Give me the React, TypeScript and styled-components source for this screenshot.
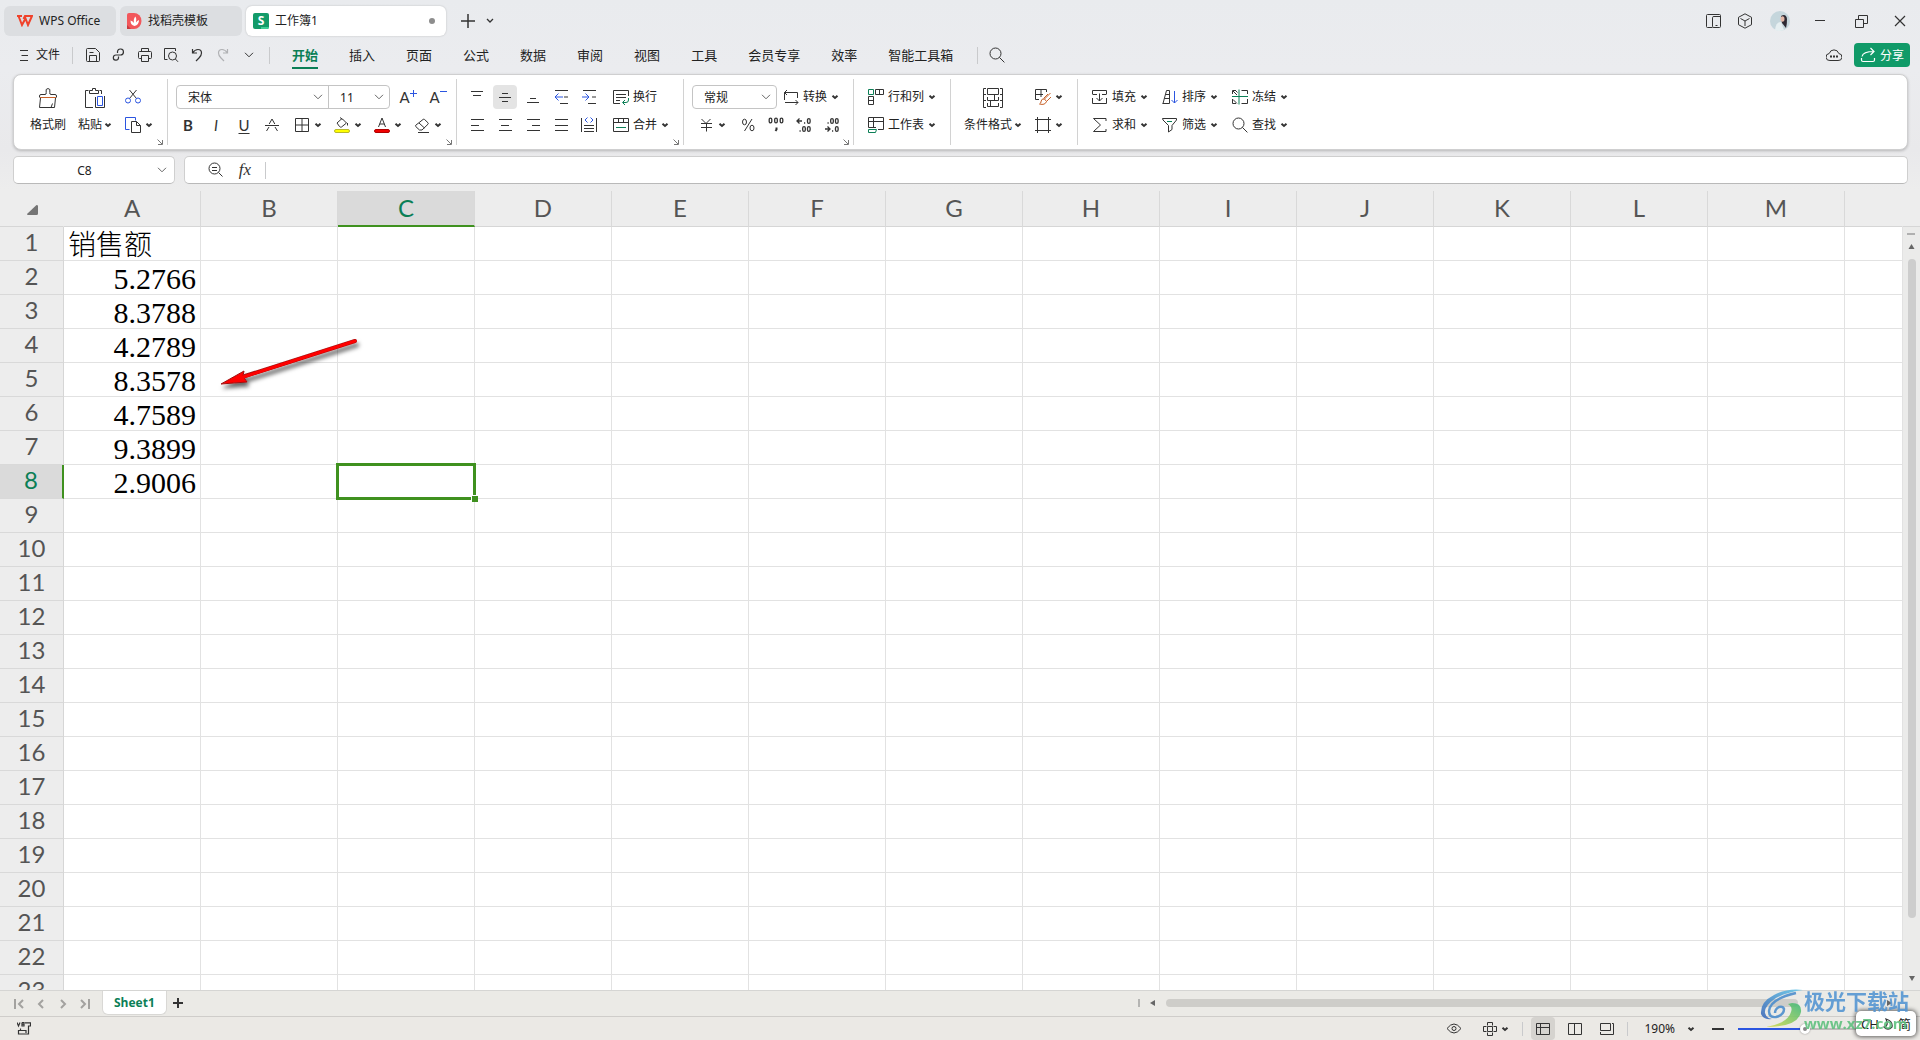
import React from "react";
import styled, { createGlobalStyle, css } from "styled-components";

const ui = `"Noto Sans", "Noto Sans CJK SC", sans-serif`;
const ink = "#333333";
const blue = "#2b55e0";
const green = "#0b7f56";
const orange = "#c8622a";
const gridGreen = "#3f911f";

const GlobalStyle = createGlobalStyle`
  * { box-sizing: border-box; }
  html, body, #root { height: 100%; }
  body { margin: 0; overflow: hidden; font-family: ${ui}; font-size: 12px; color: #222; }
  button, input, select { font: inherit; color: inherit; margin: 0; border: 0; background: none; padding: 0; outline: 0; }
  svg { display: block; flex: none; }
`;

const Shell = styled.div`
  display: flex;
  flex-direction: column;
  height: 100vh;
  background: linear-gradient(#e9ebee 0, #ebecef 70px, #e9e9eb 150px, #ededed 190px);
`;

/* ---------- title bar ---------- */

const TitleBar = styled.header`
  display: flex;
  align-items: center;
  gap: 4px;
  height: 38px;
  padding: 4px 1px 0 4px;
`;

const DocTab = styled.button<{ $width: number; $active?: boolean; $inset?: number }>`
  display: flex;
  align-items: center;
  gap: 6px;
  width: ${(p) => p.$width}px;
  height: 30px;
  padding: 0 ${(p) => p.$inset ?? 7}px;
  border-radius: 6px;
  background: ${(p) => (p.$active ? "#fff" : "#dcdee1")};
  box-shadow: ${(p) => (p.$active ? "0 0 2px rgba(0,0,0,.22)" : "none")};
  line-height: 16px;
  white-space: nowrap;
`;

const UnsavedDot = styled.i`
  width: 6px;
  height: 6px;
  margin-left: auto;
  margin-right: 4px;
  border-radius: 50%;
  background: #8d8d8d;
`;

const Spacer = styled.div`
  flex: 1;
`;

const WindowButton = styled.button<{ $width?: number }>`
  display: flex;
  align-items: center;
  justify-content: center;
  width: ${(p) => p.$width ?? 32}px;
  height: 30px;
`;

const WindowButtons = styled.div`
  display: flex;
  align-items: center;
`;

/* ---------- menu bar ---------- */

const MenuBar = styled.nav`
  display: flex;
  align-items: center;
  height: 36px;
  padding: 0 10px 2px 19px;
`;

const FileButton = styled.button`
  display: flex;
  align-items: center;
  gap: 7px;
  padding-right: 12px;
  line-height: 16px;
`;

const Rule = styled.i<{ $height?: number }>`
  flex: none;
  width: 1px;
  height: ${(p) => p.$height ?? 17}px;
  background: #c9cacc;
`;

const QuickTools = styled.div`
  display: flex;
  padding: 0 7px;
`;

const QuickButton = styled.button<{ $width?: number }>`
  display: flex;
  align-items: center;
  justify-content: center;
  width: ${(p) => p.$width ?? 26}px;
  height: 24px;
`;

const MenuTabs = styled.div`
  display: flex;
  gap: 31px;
  padding: 0 24px 0 22px;
`;

const MenuTab = styled.button<{ $active?: boolean }>`
  height: 28px;
  padding-top: 2px;
  font-size: 13px;
  line-height: 20px;
  font-weight: ${(p) => (p.$active ? 700 : 400)};
  color: ${(p) => (p.$active ? green : "#222")};
  border-bottom: 2px solid ${(p) => (p.$active ? green : "transparent")};
`;

const ShareButton = styled.button`
  display: flex;
  align-items: center;
  gap: 4px;
  height: 24px;
  padding: 0 6px;
  margin-left: 7px;
  border-radius: 4px;
  background: #109a68;
  color: #fff;
`;

/* ---------- ribbon ---------- */

const Ribbon = styled.section`
  display: flex;
  flex: none;
  margin: 0 12px 0 13px;
  padding: 4px 0 4px 3px;
  border: 1px solid #cfcfd0;
  border-radius: 8px;
  background: #fff;
  box-shadow: 0 1px 3px rgba(0, 0, 0, 0.22);
`;

const Group = styled.div<{ $start?: number; $end?: number; $gap?: number; $last?: boolean }>`
  position: relative;
  display: flex;
  gap: ${(p) => p.$gap ?? 6}px;
  height: 66px;
  padding: 6px ${(p) => p.$end ?? 10}px 8px ${(p) => p.$start ?? 10}px;
  border-right: ${(p) => (p.$last ? "0" : "1px solid #d2d2d2")};
`;

const Stack = styled.div`
  display: flex;
  flex-direction: column;
  gap: 4px;
`;

const Line = styled.div<{ $gap?: number }>`
  display: flex;
  align-items: center;
  gap: ${(p) => p.$gap ?? 4}px;
  height: 24px;
`;

const BigButton = styled.button`
  display: flex;
  flex-direction: column;
  align-items: center;
  justify-content: space-between;
  height: 52px;
  padding: 3px 3px 4px;
  line-height: 16px;
  white-space: nowrap;
`;

const BigLabel = styled.span`
  display: flex;
  align-items: center;
  gap: 2px;
`;

const ToolButton = styled.button<{ $on?: boolean }>`
  display: flex;
  align-items: center;
  justify-content: center;
  width: 24px;
  height: 24px;
  border-radius: 4px;
  background: ${(p) => (p.$on ? "#e4e4e4" : "transparent")};
`;

const SplitButton = styled.button`
  display: flex;
  align-items: center;
  gap: 4px;
  width: 36px;
  height: 24px;
  padding-left: 6px;
`;

const LabelButton = styled.button`
  display: flex;
  align-items: center;
  gap: 4px;
  height: 24px;
  padding: 0 4px;
  line-height: 16px;
  white-space: nowrap;
`;

const Glyph = styled.span<{ $bold?: boolean; $italic?: boolean; $underline?: boolean }>`
  font-family: Lato, sans-serif;
  font-size: 15px;
  line-height: 20px;
  color: ${ink};
  font-weight: ${(p) => (p.$bold ? 700 : 400)};
  font-style: ${(p) => (p.$italic ? "italic" : "normal")};
  ${(p) => p.$underline && css`text-decoration: underline; text-underline-offset: 2px;`}
`;

const Combo = styled.div`
  display: flex;
  border: 1px solid #c4c4c4;
  border-radius: 4px;
`;

const SelectBox = styled.label<{ $width: number; $divided?: boolean }>`
  position: relative;
  display: flex;
  align-items: center;
  width: ${(p) => p.$width}px;
  height: 22px;
  border-right: ${(p) => (p.$divided ? "1px solid #c4c4c4" : "0")};
  > svg {
    position: absolute;
    right: 5px;
    pointer-events: none;
  }
`;

const Select = styled.select`
  appearance: none;
  width: 100%;
  height: 22px;
  padding-left: 11px;
`;

const Launcher = styled.button`
  position: absolute;
  right: 4px;
  bottom: 0;
`;

/* ---------- formula bar ---------- */

const FormulaBar = styled.div`
  display: flex;
  flex: none;
  gap: 9px;
  padding: 6px 12px 7px 13px;
`;

const Field = styled.div<{ $width?: number }>`
  display: flex;
  align-items: center;
  flex: ${(p) => (p.$width ? "none" : 1)};
  width: ${(p) => (p.$width ? p.$width + "px" : "auto")};
  height: 28px;
  padding-left: ${(p) => (p.$width ? 0 : 12)}px;
  border: 1px solid #cfcfcf;
  border-bottom-color: #b9b9b9;
  border-radius: 5px;
  background: #fff;
`;

const NameInput = styled.input`
  flex: 1;
  min-width: 0;
  text-align: center;
  padding-left: 5px;
`;

const FormulaInput = styled.input`
  flex: 1;
  padding: 0 8px;
`;

const FxButton = styled.button`
  width: 32px;
  padding-right: 8px;
  font-family: "Liberation Serif", serif;
  font-style: italic;
  font-size: 17px;
  line-height: 20px;
  color: ${ink};
`;

/* ---------- sheet ---------- */

const SheetArea = styled.main`
  position: relative;
  display: flex;
  flex: 1;
  min-height: 0;
  overflow: hidden;
`;

const GridView = styled.div`
  flex: 1;
  overflow: hidden;
`;

const Grid = styled.table`
  width: 100%;
  table-layout: fixed;
  border-collapse: separate;
  border-spacing: 0;
  th, td { padding: 0; }
`;

const Col = styled.col<{ $width?: number }>`
  width: ${(p) => (p.$width ? p.$width + "px" : "auto")};
`;

const ColHead = styled.th<{ $active?: boolean; $corner?: boolean }>`
  height: 36px;
  border-bottom: ${(p) => (p.$active ? `2px solid ${gridGreen}` : "1px solid #d6d6d6")};
  border-right: 1px solid ${(p) => (p.$corner ? "transparent" : "#d9d9d9")};
  background: ${(p) => (p.$active ? "#dadada" : "#ededed")};
  color: ${(p) => (p.$active ? green : "#555")};
  font: 400 24px/33px Lato, sans-serif;
  vertical-align: top;
`;

const CornerMark = styled.div`
  display: flex;
  justify-content: flex-end;
  padding: 14px 25px 0 0;
`;

const RowHead = styled.th<{ $active?: boolean }>`
  height: 34px;
  border-bottom: 1px solid #d9d9d9;
  border-right: ${(p) => (p.$active ? `2px solid ${gridGreen}` : "1px solid #d6d6d6")};
  background: ${(p) => (p.$active ? "#dadada" : "#ededed")};
  color: ${(p) => (p.$active ? green : "#555")};
  font: 400 24px/30px Lato, sans-serif;
  vertical-align: top;
`;

const Cell = styled.td<{ $selected?: boolean }>`
  height: 34px;
  border-right: 1px solid #e2e2e2;
  border-bottom: 1px solid #e2e2e2;
  background: #fff;
  ${(p) =>
    p.$selected &&
    css`
      position: relative;
      &::before {
        content: "";
        position: absolute;
        inset: -2px;
        border: 3px solid ${gridGreen};
      }
      &::after {
        content: "";
        position: absolute;
        right: -4px;
        bottom: -4px;
        width: 6px;
        height: 6px;
        border: solid #fff;
        border-width: 1px 0 0 1px;
        background: ${gridGreen};
      }
    `}
`;

const CellText = styled.div<{ $text?: boolean }>`
  height: 33px;
  padding: 0 4px;
  color: #000;
  text-align: ${(p) => (p.$text ? "left" : "right")};
  font-family: "Liberation Serif", "Noto Sans CJK SC", serif;
  font-size: ${(p) => (p.$text ? 28 : 30)}px;
  font-weight: 300;
  line-height: ${(p) => (p.$text ? 38 : 36)}px;
`;

const VScroll = styled.div`
  display: flex;
  flex-direction: column;
  align-items: center;
  gap: 8px;
  width: 17px;
  padding: 36px 0 8px;
  background: linear-gradient(#ededed 35px, #d6d6d6 35px, #d6d6d6 36px, #ebebea 36px);
`;

const ScrollMark = styled.i<{ $w: number; $h: number }>`
  width: ${(p) => p.$w}px;
  height: ${(p) => p.$h}px;
  background: #b5b5b3;
`;

const VThumb = styled.div`
  width: 8px;
  height: 93%;
  border-radius: 4px;
  background: #cdcdcd;
`;

const VTrack = styled.div`
  flex: 1;
  width: 8px;
`;

const Pointer = styled.svg`
  position: absolute;
  left: 210px;
  top: 139px;
  pointer-events: none;
`;

/* ---------- sheet tabs and status ---------- */

const TabStrip = styled.div`
  display: flex;
  flex: none;
  height: 27px;
  padding: 0 28px 0 8px;
  border-top: 1px solid #d5d5d3;
  border-bottom: 1px solid #cfcdca;
  background: #ebeae6;
`;

const SheetNav = styled.div`
  display: flex;
  align-items: center;
  width: 94px;
`;

const NavButton = styled.button`
  display: flex;
  align-items: center;
  justify-content: center;
  width: 22px;
  height: 24px;
`;

const SheetTab = styled.button`
  height: 24px;
  padding: 0 11px;
  border: 1px solid #d9d8d5;
  border-top: 0;
  border-radius: 0 0 6px 6px;
  background: #fff;
  color: ${green};
  font-family: "Open Sans", sans-serif;
  font-size: 12px;
  font-weight: 700;
  line-height: 22px;
`;

const HScroll = styled.div`
  display: flex;
  align-items: center;
  width: 40%;
  height: 24px;
  margin-left: auto;
  gap: 10px;
`;

const HTrack = styled.div`
  flex: 1;
`;

const HThumb = styled.div`
  width: 89%;
  height: 8px;
  border-radius: 4px;
  background: #cecdc9;
`;

const StatusBar = styled.footer`
  display: flex;
  align-items: center;
  flex: none;
  height: 23px;
  padding: 0 28px 0 17px;
  background: #ebe9e5;
`;

const StatusButton = styled.button<{ $width?: number; $on?: boolean }>`
  display: flex;
  align-items: center;
  justify-content: center;
  gap: 4px;
  width: ${(p) => p.$width ?? 24}px;
  height: 23px;
  border-radius: 4px;
  background: ${(p) => (p.$on ? "#d5d3cf" : "transparent")};
`;

const ViewModes = styled.div`
  display: flex;
  gap: 8px;
  padding: 0 8px;
`;

const ZoomLevel = styled.button`
  display: flex;
  align-items: center;
  gap: 12px;
  margin: 0 17px 0 16px;
  line-height: 16px;
`;

const ZoomSlider = styled.input`
  appearance: none;
  width: 134px;
  height: 12px;
  margin: 0 8px 0 14px;
  &::-webkit-slider-runnable-track {
    height: 2px;
    background: linear-gradient(90deg, #2b55e0 50%, #bdbcb9 50%);
  }
  &::-webkit-slider-thumb {
    appearance: none;
    width: 10px;
    height: 10px;
    margin-top: -4px;
    border: 3px solid #fff;
    border-radius: 50%;
    background: #888;
    box-shadow: 0 0 2px rgba(0, 0, 0, 0.4);
  }
`;

const ImeBox = styled.div`
  position: absolute;
  right: 4px;
  bottom: 4px;
  display: flex;
  align-items: center;
  justify-content: space-between;
  width: 60px;
  height: 25px;
  padding: 0 5px;
  border-radius: 5px;
  background: #fff;
  box-shadow: 0 0 4px 1px rgba(0, 0, 0, 0.6);
  font-size: 13px;
  line-height: 18px;
`;

const Watermark = styled.div`
  position: absolute;
  right: 11px;
  bottom: 7px;
  display: flex;
  opacity: 0.88;
  pointer-events: none;
`;

const WatermarkText = styled.div`
  display: flex;
  flex-direction: column;
  font-family: "Open Sans", "Noto Sans CJK SC", sans-serif;
  white-space: nowrap;
`;

const WatermarkName = styled.span`
  color: #5294d2;
  font-size: 21px;
  font-weight: 700;
  line-height: 24px;
`;

const WatermarkUrl = styled.span`
  color: #5cc07c;
  font-size: 15px;
  font-weight: 700;
  line-height: 20px;
`;

/* ---------- drawings ---------- */

type IconProps = { w?: number; h?: number; color?: string; sw?: number; children: React.ReactNode };

const Icon = ({ w = 16, h = 16, color = ink, sw = 1, children }: IconProps) => (
  <svg width={w} height={h} viewBox={`0 0 ${w} ${h}`} fill="none" stroke={color} strokeWidth={sw} aria-hidden="true">
    {children}
  </svg>
);

const Caret = () => (
  <Icon w={8} h={8} sw={2}>
    <path d="M1.5 2.8 L4 5 L6.5 2.8" />
  </Icon>
);

const Chevron = ({ color = "#666" }: { color?: string }) => (
  <Icon w={10} h={6} color={color}>
    <path d="M1 .8 L5 4.8 L9 .8" />
  </Icon>
);

const LaunchIcon = () => (
  <Icon w={6} h={6} color="#777">
    <path d="M.5 .5 L5 5 M5.5 1 V5.5 H1" />
  </Icon>
);

type Stroke = [number, number, number];

const Lines = ({ rows }: { rows: Stroke[] }) => (
  <Icon>
    <path d={rows.map(([x1, x2, y]) => `M${x1} ${y}.5H${x2}`).join("")} />
  </Icon>
);

const icons = {
  save: (
    <Icon>
      <path d="M1.5 2.5 Q1.5 1.5 2.5 1.5 H10.5 L14.5 5.5 V13.5 Q14.5 14.5 13.5 14.5 H2.5 Q1.5 14.5 1.5 13.5 Z M4.5 14.5 V8.5 H11.5 V14.5 M4.5 5.5 H8.5" />
    </Icon>
  ),
  link: (
    <Icon sw={1.2}>
      <path d="M6.5 6 V4.5 A3 3 0 1 1 9.5 8 H5 A2.6 2.6 0 1 0 7.5 11 V9.5" />
    </Icon>
  ),
  print: (
    <Icon>
      <path d="M4.5 4.5 V1.5 H11.5 V4.5 M4.5 11.5 H2.5 Q1.5 11.5 1.5 10.5 V5.5 Q1.5 4.5 2.5 4.5 H13.5 Q14.5 4.5 14.5 5.5 V10.5 Q14.5 11.5 13.5 11.5 H11.5 M4.5 8.5 H11.5 V14.5 H4.5 Z" />
    </Icon>
  ),
  preview: (
    <Icon>
      <path d="M4.5 12.5 H1.5 V1.5 H12.5 V4" />
      <circle cx="9.5" cy="9" r="4" />
      <path d="M12.4 12 L15 14.8" />
    </Icon>
  ),
  undo: (
    <Icon sw={1.2}>
      <path d="M3.5 2 V6 H8 M3.5 6 Q6 2.5 9 2.5 Q12.5 2.5 12.5 6 Q12.5 8.5 10 11 L7 14" />
    </Icon>
  ),
  redo: (
    <Icon sw={1.2} color="#b0b1b4">
      <path d="M12.5 2 V6 H8 M12.5 6 Q10 2.5 7 2.5 Q3.5 2.5 3.5 6 Q3.5 8.5 6 11 L9 14" />
    </Icon>
  ),
  search: (
    <Icon>
      <circle cx="6.5" cy="6.5" r="5.5" />
      <path d="M10.4 10.4 L15.4 15.4" />
    </Icon>
  ),
  brush: (
    <Icon w={20} h={20}>
      <path d="M1.5 9.5 V8 Q1.5 6.5 3 6.5 H7 Q8.5 6.5 8.2 4.5 Q7.2 .5 10 .5 Q12.8 .5 11.8 4.5 Q11.5 6.5 13 6.5 H17 Q18.5 6.5 18.5 8 V9.5 M2.5 10 L1.5 19.5 H16.5 L17.5 10 M13 19.5 L14.5 15.5" />
      <path d="M2 9.5 H18" stroke={orange} />
    </Icon>
  ),
  paste: (
    <Icon w={20} h={20}>
      <path d="M3.5 2.5 H.5 V19.5 H8 M14.5 2.5 H16.5 V6 M4.5 2.5 H7.5 V.5 H10.5 V2.5 H13.5 V5.5 H4.5 Z M10.5 9 V19.5 H19.5 V8" />
      <path d="M12.5 8.5 H17.5 V17.5 H12.5 Z" stroke={blue} />
    </Icon>
  ),
  cut: (
    <Icon>
      <path d="M4.5 1 L11.4 9.4 M11.5 1 L4.6 9.4" />
      <circle cx="3" cy="11.5" r="2.5" stroke={blue} />
      <circle cx="13" cy="11.5" r="2.5" stroke={blue} />
    </Icon>
  ),
  copy: (
    <Icon>
      <path d="M10.5 3.5 V.5 H.5 V12.5 H4.5" stroke={blue} />
      <path d="M6.5 4.5 H11.5 L15.5 8.5 V15.5 H6.5 Z M11.5 4.5 V8.5 H15.5" />
    </Icon>
  ),
  plus: (
    <Icon w={7} h={14} color={blue}>
      <path d="M3.5 0 V7 M0 3.5 H7" />
    </Icon>
  ),
  minus: (
    <Icon w={7} h={14} color={blue}>
      <path d="M0 1.5 H7" />
    </Icon>
  ),
  strike: (
    <Icon>
      <path d="M1 8.5 H15 M5.2 7 L8 2 L10.8 7 M2.5 14 L5 10 M13.5 14 L11 10" />
    </Icon>
  ),
  borders: (
    <Icon>
      <path d="M1.5 1.5 H14.5 V14.5 H1.5 Z M8 1.5 V14.5 M1.5 8 H14.5" />
    </Icon>
  ),
  fill: (
    <Icon>
      <path d="M3 6 L8 1.5 L12.5 6 L7.5 10 Q6.5 10.5 5.5 9.5 Z M6 .5 L8.5 2.5 M13.5 6 V8.5" />
      <rect x=".5" y="12.5" width="15" height="3" rx="1.5" fill="#ffff00" stroke="#b9b92a" />
    </Icon>
  ),
  fontColor: (
    <Icon>
      <path d="M4.5 10 L8 1 L11.5 10 M5.7 7 H10.3" />
      <rect x=".5" y="12.5" width="15" height="3" rx="1.5" fill="#f00000" stroke="#b00000" />
    </Icon>
  ),
  eraser: (
    <Icon>
      <path d="M9 2.5 Q9.8 1.8 10.6 2.5 L14 5.8 Q14.6 6.5 14 7.2 L8 13 H5.5 L1.8 9.6 Q1 9 1.8 8.2 Z M5 6 L10.5 11 M4 15.5 H15" />
    </Icon>
  ),
  outdent: (
    <Icon>
      <path d="M2 1.5 H15 M11 8 H15 M7 14.5 H15" />
      <path d="M2 8 H10 M5.5 4.5 L2 8 L5.5 11.5" stroke={blue} />
    </Icon>
  ),
  indent: (
    <Icon>
      <path d="M2 1.5 H15 M11 8 H15 M7 14.5 H15" />
      <path d="M1 8 H8 M4.5 4.5 L8 8 L4.5 11.5" stroke={blue} />
    </Icon>
  ),
  distribute: (
    <Icon>
      <path d="M.5 1 V15 M15.5 1 V15 M3 8.5 H13 M3 11.5 H13 M3 14.5 H13" />
      <path d="M6.5 .5 L4 3 L6.5 5.5 M9.5 .5 L12 3 L9.5 5.5" stroke={blue} />
    </Icon>
  ),
  wrap: (
    <Icon>
      <path d="M15.5 7 V1.5 H.5 V14.5 H7 M3 5.5 H13 M3 8.5 H13 M3 11.5 H7" />
      <path d="M15.5 9 V11 Q15.5 13.5 13 13.5 H10 M12 11 L9.5 13.5 L12 16" stroke={green} />
    </Icon>
  ),
  merge: (
    <Icon>
      <path d="M.5 1.5 H15.5 V14.5 H.5 Z M.5 5.5 H15.5 M5.5 1.5 V5.5 M10.5 1.5 V5.5" />
      <path d="M3 10.5 H13" stroke={green} />
    </Icon>
  ),
  convert: (
    <Icon>
      <path d="M1.5 11 V3.5 H14.5 V9 M4 1 L1.5 3.5 L4 6 M2 13.5 H15 M12.5 11 L15 13.5 L12.5 16" />
    </Icon>
  ),
  yen: (
    <Icon>
      <path d="M3.5 2 L8 6.5 L12.5 2 M8.5 6.5 V14.5 M3 6.5 H14 M3 10.5 H14" />
    </Icon>
  ),
  percent: (
    <Icon>
      <ellipse cx="4.5" cy="5" rx="2" ry="2.8" />
      <ellipse cx="12" cy="11" rx="2" ry="2.8" />
      <path d="M12 2 L4.5 14" />
    </Icon>
  ),
  thousands: (
    <Icon sw={1.3}>
      <rect x="1.2" y="1.2" width="2.6" height="4.6" rx="1.3" />
      <rect x="6.7" y="1.2" width="2.6" height="4.6" rx="1.3" />
      <rect x="12.2" y="1.2" width="2.6" height="4.6" rx="1.3" />
      <path d="M8.5 10.5 V12.5 L7.5 14" strokeWidth="2" />
    </Icon>
  ),
  moreDigits: (
    <Icon sw={1.3}>
      <path d="M1 4 H6 M3.5 1.5 L1 4 L3.5 6.5 M8 6 H9.2 M3.5 14 H4.7" />
      <rect x="11.5" y="1.7" width="2.6" height="4.6" rx="1.3" />
      <rect x="6.7" y="9.7" width="2.6" height="4.6" rx="1.3" />
      <rect x="11.5" y="9.7" width="2.6" height="4.6" rx="1.3" />
    </Icon>
  ),
  lessDigits: (
    <Icon sw={1.3}>
      <path d="M1 12 H6 M3.5 9.5 L6 12 L3.5 14.5 M8 14 H9.2 M3.5 6 H4.7" />
      <rect x="11.5" y="9.7" width="2.6" height="4.6" rx="1.3" />
      <rect x="6.7" y="1.7" width="2.6" height="4.6" rx="1.3" />
      <rect x="11.5" y="1.7" width="2.6" height="4.6" rx="1.3" />
    </Icon>
  ),
  rowsCols: (
    <Icon>
      <path d="M7.5 .5 H15.5 V5.5 H7.5 Z M11.5 .5 V5.5 M.5 7.5 H5.5 V15.5 H.5 Z M.5 11.5 H5.5" />
      <path d="M.5 .5 H5.5 V5.5 H.5 Z" stroke={green} />
    </Icon>
  ),
  worksheet: (
    <Icon>
      <path d="M.5 10.5 V.5 H15.5 V12.5 H10 M.5 4.5 H15.5 M5.5 .5 V10.5 M.5 10.5 H8" />
      <path d="M.5 12.5 H8.5 L7.5 15.5 H.5 Z" stroke={green} />
    </Icon>
  ),
  conditional: (
    <Icon w={20} h={20}>
      <path d="M3 .5 H.5 V19.5 H3 M17 .5 H19.5 V19.5 H17 M.5 6.5 H3 M.5 12.5 H3 M17 6.5 H19.5 M17 12.5 H19.5 M4.5 .5 H15.5 V6.5 H4.5 Z M4.5 9 V12.5 H15.5 V9 M11.5 6.5 V12.5 M7.5 12.5 V18.5 M4.5 15 V18.5 H15.5 V15" />
    </Icon>
  ),
  tableStyle: (
    <Icon>
      <path d="M4 10.5 H.5 V.5 H11.5 V3 M.5 5.5 H8 M6 .5 V8" />
      <path d="M15.5 4 L9.5 10 M16 8 L11.5 12.5 M9.5 10 Q6.5 9.5 6.2 12 Q6 14.5 4.5 15 Q10 16.5 11.5 12.5 Z M13 5 L8.5 9.5" stroke={orange} />
    </Icon>
  ),
  cellFrame: (
    <Icon>
      <path d="M2.5 0 V16 M13.5 0 V16 M0 2.5 H16 M0 13.5 H16" />
    </Icon>
  ),
  fillDown: (
    <Icon>
      <path d="M.5 5 V1.5 H14.5 V5 M.5 5.5 H5 M10 5.5 H14.5 M.5 9 V14.5 H14.5 V9 M7.5 4.5 V12 M4.5 9 L7.5 12 L10.5 9" />
    </Icon>
  ),
  sum: (
    <Icon>
      <path d="M14 4 V1.5 H1.5 L8.5 8 L1.5 14.5 H14 V12" />
    </Icon>
  ),
  sort: (
    <Icon>
      <path d="M1 14.5 L4.5 1.5 H7.5 V14.5 M2.5 9.5 H7.5 M3.8 5.5 H7.5 M.5 14.5 H7.5" />
      <path d="M12.5 2 V14 M9.5 11 L12.5 14 L15.5 11" stroke={blue} />
    </Icon>
  ),
  filter: (
    <Icon>
      <path d="M.5 1.5 H14.5 V3 L10 8.5 V12.5 L6.5 15 V8.5 L1 3 Z" />
      <path d="M5 4.5 H10" stroke={green} />
    </Icon>
  ),
  freeze: (
    <Icon>
      <path d="M4 1.5 H.5 V5 M.5 10 V14.5 H4 M9.5 1.5 H15.5 V5 M15.5 10 V14.5 H9.5 M1 2 L5 6 M3.5 1.5 L5.5 3.5 M1 10.5 L5 14.5" />
      <path d="M7 .5 V15.5 M0 7.5 H16" stroke={green} />
    </Icon>
  ),
};

const menuTabs = ["开始", "插入", "页面", "公式", "数据", "审阅", "视图", "工具", "会员专享", "效率", "智能工具箱"];
const columns = "ABCDEFGHIJKLM".split("");
const rowCount = 23;
const columnA: Record<number, string> = {
  1: "销售额",
  2: "5.2766",
  3: "8.3788",
  4: "4.2789",
  5: "8.3578",
  6: "4.7589",
  7: "9.3899",
  8: "2.9006",
};

const Title = () => (
  <TitleBar>
    <DocTab $width={112} $inset={13}>
      <Icon w={16} h={12} color="#f0422b" sw={2}>
        <path d="M0 1 H5 M1.5 1 L5 10 L8.5 3.5 L11 10 L15 1 H8 L6.5 4" />
      </Icon>
      WPS Office
    </DocTab>
    <DocTab $width={122}>
      <svg width="15" height="16" viewBox="0 0 15 16" aria-hidden="true">
        <path d="M0 2 Q0 0 2 0 H7 A7.5 8 0 0 1 7 16 H0 Z" fill="#f2575b" />
        <path d="M0 12 L4 16 H0 Z" fill="#c93a3e" />
        <path d="M7.5 13 Q3.5 12 3.5 7.5 Q6 8 7 10 Q6 6 8.5 3.5 Q10 6 9 9.5 Q10 7.5 12 7 Q12 12 7.5 13 Z" fill="#fff" />
      </svg>
      找稻壳模板
    </DocTab>
    <DocTab $width={200} $active>
      <svg width="16" height="16" viewBox="0 0 16 16" aria-hidden="true">
        <rect width="16" height="16" rx="2" fill="#139b69" />
        <path d="M8 16 V14 H16 Q16 16 14 16 Z" fill="#3fcf96" />
        <text x="8" y="12" textAnchor="middle" fontFamily="Open Sans, sans-serif" fontWeight="700" fontSize="12" fill="#fff">S</text>
      </svg>
      工作簿1
      <UnsavedDot />
    </DocTab>
    <WindowButtons>
      <WindowButton $width={36} aria-label="新建">
        <Icon w={14} h={14} sw={1.5}>
          <path d="M7 0 V14 M0 7 H14" />
        </Icon>
      </WindowButton>
      <Icon w={8} h={6} sw={1.3}>
        <path d="M1 1 L4 4 L7 1" />
      </Icon>
    </WindowButtons>
    <Spacer />
    <WindowButtons>
      <WindowButton aria-label="分屏">
        <Icon w={15} h={15}>
          <path d="M6.5 13.5 H1.5 Q.5 13.5 .5 12.5 V1.5 Q.5 .5 1.5 .5 H13.5 Q14.5 .5 14.5 1.5 V12.5 Q14.5 13.5 13.5 13.5 H8 Q6.5 13.5 6.5 12.5 V3.5 Q6.5 2.5 8 2.5 H14 M9.5 11.5 H11.5" />
        </Icon>
      </WindowButton>
      <WindowButton aria-label="应用">
        <Icon w={16} h={16}>
          <path d="M8 .8 L14.5 4.3 V11.7 L8 15.2 L1.5 11.7 V4.3 Z M3.5 5.5 L8 8 L12.5 5.5 M8 8 V13" />
        </Icon>
      </WindowButton>
      <WindowButton $width={38} aria-label="账号">
        <svg width="20" height="20" viewBox="0 0 20 20" aria-hidden="true">
          <circle cx="10" cy="10" r="10" fill="#c5d6dc" />
          <path d="M5 19 Q6 11 11 11 L14 19 Q9 21 5 19" fill="#e6eff1" />
          <path d="M11 5 Q16 2 17 8 Q17 14 16 17 L12 12 Z" fill="#2e2a33" />
          <ellipse cx="12.5" cy="8" rx="2" ry="2.8" fill="#e3b8a8" />
        </svg>
      </WindowButton>
      <WindowButton $width={42} aria-label="最小化">
        <Icon w={12} h={12}>
          <path d="M1 5.5 H11" />
        </Icon>
      </WindowButton>
      <WindowButton $width={40} aria-label="还原">
        <Icon w={13} h={13}>
          <path d="M.5 4.5 H8.5 V12.5 H.5 Z M3.5 4.5 V.5 H12.5 V8.5 H8.5" />
        </Icon>
      </WindowButton>
      <WindowButton $width={38} aria-label="关闭">
        <Icon w={12} h={12} sw={1.2}>
          <path d="M1 1 L11 11 M11 1 L1 11" />
        </Icon>
      </WindowButton>
    </WindowButtons>
  </TitleBar>
);

const Menu = () => (
  <MenuBar>
    <FileButton>
      <Icon w={10} h={12}>
        <path d="M1 1.5 H9 M2.5 6.5 H9 M1 11.5 H9" />
      </Icon>
      文件
    </FileButton>
    <Rule />
    <QuickTools>
      <QuickButton aria-label="保存">{icons.save}</QuickButton>
      <QuickButton aria-label="链接">{icons.link}</QuickButton>
      <QuickButton aria-label="打印">{icons.print}</QuickButton>
      <QuickButton aria-label="打印预览">{icons.preview}</QuickButton>
      <QuickButton aria-label="撤销">{icons.undo}</QuickButton>
      <QuickButton aria-label="恢复">{icons.redo}</QuickButton>
      <QuickButton aria-label="更多">
        <Chevron color={ink} />
      </QuickButton>
    </QuickTools>
    <Rule />
    <MenuTabs>
      {menuTabs.map((label, i) => (
        <MenuTab key={label} $active={i === 0}>
          {label}
        </MenuTab>
      ))}
    </MenuTabs>
    <Rule />
    <QuickButton $width={38} aria-label="搜索">{icons.search}</QuickButton>
    <Spacer />
    <QuickButton aria-label="云状态">
      <Icon w={16} h={14}>
        <path d="M4 12.5 A3.5 3.5 0 0 1 3.2 5.5 A5 5 0 0 1 12.8 5.5 A3.5 3.5 0 0 1 12 12.5 Z" />
        <path d="M4 8.5 H6 M7 8.5 H9 M10 8.5 H12" strokeWidth="2" />
      </Icon>
    </QuickButton>
    <ShareButton>
      <Icon w={16} color="#fff" sw={1.2}>
        <path d="M2 9.5 Q3 4.5 14 4.5 M10.5 1 L14 4.5 L10.5 8 M1.5 11 V13 Q1.5 14.5 3 14.5 H13 Q14.5 14.5 14.5 13 V11" />
      </Icon>
      分享
    </ShareButton>
  </MenuBar>
);

const RibbonLabel = ({ icon, children, caret = true }: { icon: React.ReactNode; children: string; caret?: boolean }) => (
  <LabelButton>
    {icon}
    {children}
    {caret && <Caret />}
  </LabelButton>
);

const Tools = () => (
  <Ribbon>
    <Group>
      <BigButton>
        {icons.brush}
        格式刷
      </BigButton>
      <BigButton>
        {icons.paste}
        <BigLabel>
          粘贴
          <Caret />
        </BigLabel>
      </BigButton>
      <Stack>
        <ToolButton aria-label="剪切">{icons.cut}</ToolButton>
        <LabelButton aria-label="复制">
          {icons.copy}
          <Caret />
        </LabelButton>
      </Stack>
      <Launcher aria-label="剪贴板设置"><LaunchIcon /></Launcher>
    </Group>

    <Group $start={8} $end={6}>
      <Stack>
        <Line $gap={6}>
          <Combo>
            <SelectBox $width={152} $divided>
              <Select aria-label="字体">
                <option>宋体</option>
              </Select>
              <Chevron />
            </SelectBox>
            <SelectBox $width={60}>
              <Select aria-label="字号">
                <option>11</option>
              </Select>
              <Chevron />
            </SelectBox>
          </Combo>
          <ToolButton aria-label="增大字号">
            <Glyph>A</Glyph>
            {icons.plus}
          </ToolButton>
          <ToolButton aria-label="减小字号">
            <Glyph>A</Glyph>
            {icons.minus}
          </ToolButton>
        </Line>
        <Line>
          <ToolButton><Glyph $bold>B</Glyph></ToolButton>
          <ToolButton><Glyph $italic>I</Glyph></ToolButton>
          <ToolButton><Glyph $underline>U</Glyph></ToolButton>
          <ToolButton aria-label="删除线">{icons.strike}</ToolButton>
          <SplitButton aria-label="边框">{icons.borders}<Caret /></SplitButton>
          <SplitButton aria-label="填充颜色">{icons.fill}<Caret /></SplitButton>
          <SplitButton aria-label="字体颜色">{icons.fontColor}<Caret /></SplitButton>
          <SplitButton aria-label="清除">{icons.eraser}<Caret /></SplitButton>
        </Line>
      </Stack>
      <Launcher aria-label="字体设置"><LaunchIcon /></Launcher>
    </Group>

    <Group $start={8} $gap={8}>
      <Stack>
        <Line>
          <ToolButton aria-label="顶端对齐"><Lines rows={[[2, 14, 2], [4, 12, 6]]} /></ToolButton>
          <ToolButton aria-label="垂直居中" $on><Lines rows={[[5, 11, 4], [2, 14, 8], [5, 11, 12]]} /></ToolButton>
          <ToolButton aria-label="底端对齐"><Lines rows={[[5, 11, 9], [2, 14, 13]]} /></ToolButton>
          <ToolButton aria-label="减少缩进">{icons.outdent}</ToolButton>
          <ToolButton aria-label="增加缩进">{icons.indent}</ToolButton>
        </Line>
        <Line>
          <ToolButton aria-label="左对齐"><Lines rows={[[2, 15, 2], [2, 10, 8], [2, 15, 13]]} /></ToolButton>
          <ToolButton aria-label="居中"><Lines rows={[[2, 15, 2], [4, 12, 8], [2, 15, 13]]} /></ToolButton>
          <ToolButton aria-label="右对齐"><Lines rows={[[2, 15, 2], [7, 15, 8], [2, 15, 13]]} /></ToolButton>
          <ToolButton aria-label="两端对齐"><Lines rows={[[2, 15, 2], [2, 15, 8], [2, 15, 13]]} /></ToolButton>
          <ToolButton aria-label="分散对齐">{icons.distribute}</ToolButton>
        </Line>
      </Stack>
      <Stack>
        <RibbonLabel icon={icons.wrap} caret={false}>换行</RibbonLabel>
        <RibbonLabel icon={icons.merge}>合并</RibbonLabel>
      </Stack>
      <Launcher aria-label="对齐设置"><LaunchIcon /></Launcher>
    </Group>

    <Group $start={8} $end={9}>
      <Stack>
        <Line $gap={2}>
          <Combo>
            <SelectBox $width={83}>
              <Select aria-label="数字格式">
                <option>常规</option>
              </Select>
              <Chevron />
            </SelectBox>
          </Combo>
          <RibbonLabel icon={icons.convert}>转换</RibbonLabel>
        </Line>
        <Line $gap={8}>
          <SplitButton aria-label="货币">{icons.yen}<Caret /></SplitButton>
          <Line>
            <ToolButton aria-label="百分比">{icons.percent}</ToolButton>
            <ToolButton aria-label="千位分隔">{icons.thousands}</ToolButton>
            <ToolButton aria-label="增加小数位">{icons.moreDigits}</ToolButton>
            <ToolButton aria-label="减少小数位">{icons.lessDigits}</ToolButton>
          </Line>
        </Line>
      </Stack>
      <Launcher aria-label="数字设置"><LaunchIcon /></Launcher>
    </Group>

    <Group>
      <Stack>
        <RibbonLabel icon={icons.rowsCols}>行和列</RibbonLabel>
        <RibbonLabel icon={icons.worksheet}>工作表</RibbonLabel>
      </Stack>
    </Group>

    <Group>
      <BigButton>
        {icons.conditional}
        <BigLabel>
          条件格式
          <Caret />
        </BigLabel>
      </BigButton>
      <Stack>
        <LabelButton aria-label="表格样式">{icons.tableStyle}<Caret /></LabelButton>
        <LabelButton aria-label="单元格样式">{icons.cellFrame}<Caret /></LabelButton>
      </Stack>
    </Group>

    <Group $last>
      <Stack>
        <RibbonLabel icon={icons.fillDown}>填充</RibbonLabel>
        <RibbonLabel icon={icons.sum}>求和</RibbonLabel>
      </Stack>
      <Stack>
        <RibbonLabel icon={icons.sort}>排序</RibbonLabel>
        <RibbonLabel icon={icons.filter}>筛选</RibbonLabel>
      </Stack>
      <Stack>
        <RibbonLabel icon={icons.freeze}>冻结</RibbonLabel>
        <RibbonLabel icon={icons.search}>查找</RibbonLabel>
      </Stack>
    </Group>
  </Ribbon>
);

const Formula = () => (
  <FormulaBar>
    <Field $width={162}>
      <NameInput aria-label="名称框" defaultValue="C8" />
      <WindowButton $width={24} aria-label="名称列表">
        <Chevron />
      </WindowButton>
    </Field>
    <Field>
      <WindowButton $width={36} aria-label="浏览公式">
        <Icon>
          <circle cx="7.5" cy="6.5" r="5.5" />
          <path d="M11.5 10.5 L15.5 14.5 M5 5.5 H10 M5 8.5 H10" />
        </Icon>
      </WindowButton>
      <FxButton>fx</FxButton>
      <Rule />
      <FormulaInput aria-label="编辑栏" />
    </Field>
  </FormulaBar>
);

const Sheet = () => (
  <SheetArea>
    <GridView>
      <Grid>
        <colgroup>
          <Col $width={64} />
          {columns.map((c) => (
            <Col key={c} $width={137} />
          ))}
          <Col />
        </colgroup>
        <thead>
          <tr>
            <ColHead $corner>
              <CornerMark>
                <svg width="11" height="10" viewBox="0 0 11 10" aria-hidden="true">
                  <path d="M0 9 L9.5 0 Q11 0 11 1 V8.5 Q11 10 9.5 10 H1 Q0 10 0 9 Z" fill="#757575" />
                </svg>
              </CornerMark>
            </ColHead>
            {columns.map((c) => (
              <ColHead key={c} scope="col" $active={c === "C"}>
                {c}
              </ColHead>
            ))}
            <ColHead $corner />
          </tr>
        </thead>
        <tbody>
          {Array.from({ length: rowCount }, (_, i) => i + 1).map((row) => (
            <tr key={row}>
              <RowHead scope="row" $active={row === 8}>
                {row}
              </RowHead>
              {columns.map((c) => (
                <Cell key={c} $selected={row === 8 && c === "C"}>
                  {c === "A" && columnA[row] && <CellText $text={row === 1}>{columnA[row]}</CellText>}
                </Cell>
              ))}
              <Cell />
            </tr>
          ))}
        </tbody>
      </Grid>
    </GridView>
    <VScroll>
      <svg width="9" height="24" viewBox="0 0 9 24" aria-hidden="true">
        <path d="M0 7 H8" stroke="#b0b0b0" strokeWidth="2" />
        <path d="M4.5 17 L7.5 22 H1.5 Z" fill="#666" />
      </svg>
      <VTrack>
        <VThumb />
      </VTrack>
      <svg width="8" height="6" viewBox="0 0 8 6" aria-hidden="true">
        <path d="M1 0 H7 L4 5 Z" fill="#666" />
      </svg>
    </VScroll>
    <Pointer width="160" height="70" viewBox="0 0 160 70" aria-hidden="true">
      <defs>
        <filter id="drop" x="-10%" y="-20%" width="130%" height="170%">
          <feDropShadow dx="2" dy="4" stdDeviation="2" floodColor="#000" floodOpacity=".6" />
        </filter>
      </defs>
      <g filter="url(#drop)">
        <path d="M145 11 L35 46" stroke="#a01010" strokeWidth="4" strokeLinecap="round" />
        <path d="M11 54 L34 41 L33 46 L37 52 Z" fill="#f00" stroke="#a01010" strokeWidth="1" strokeLinejoin="round" />
        <path d="M145 11 L33 47" stroke="#f00" strokeWidth="3" strokeLinecap="round" />
      </g>
    </Pointer>
  </SheetArea>
);

const NavIcon = ({ d }: { d: string }) => (
  <Icon w={10} h={10} sw={2} color="#a3a29f">
    <path d={d} />
  </Icon>
);

const Bottom = () => (
  <>
    <TabStrip>
      <SheetNav>
        <NavButton aria-label="第一张"><NavIcon d="M1 0 V10 M9 1 L5 5 L9 9" /></NavButton>
        <NavButton aria-label="上一张"><NavIcon d="M7 1 L3 5 L7 9" /></NavButton>
        <NavButton aria-label="下一张"><NavIcon d="M3 1 L7 5 L3 9" /></NavButton>
        <NavButton aria-label="最后一张"><NavIcon d="M9 0 V10 M1 1 L5 5 L1 9" /></NavButton>
      </SheetNav>
      <SheetTab>Sheet1</SheetTab>
      <NavButton aria-label="新建工作表">
        <Icon w={10} h={10} sw={2}>
          <path d="M5 0 V10 M0 5 H10" />
        </Icon>
      </NavButton>
      <HScroll>
        <ScrollMark $w={2} $h={8} />
        <svg width="6" height="6" viewBox="0 0 6 6" aria-hidden="true">
          <path d="M5 0 V6 L0 3 Z" fill="#666" />
        </svg>
        <HTrack>
          <HThumb />
        </HTrack>
        <svg width="6" height="6" viewBox="0 0 6 6" aria-hidden="true">
          <path d="M1 0 V6 L6 3 Z" fill="#666" />
        </svg>
      </HScroll>
    </TabStrip>
    <StatusBar>
      <Icon w={14} h={13} sw={1.2}>
        <path d="M0 .5 L1.5 4 L3 .5 M5 .5 V4 H7 V.5 H5 M5 2.2 H7 M8 .8 H13.5 V4 H11.5 V12 H1.5 V8.5 H9 V11 M3.5 8.5 V6.5" />
      </Icon>
      <Spacer />
      <StatusButton $width={32} aria-label="护眼">
        <Icon>
          <path d="M1 7.5 Q8 -1.5 15 7.5 Q8 16.5 1 7.5 Z" />
          <circle cx="8" cy="7.5" r="2" />
        </Icon>
      </StatusButton>
      <StatusButton $width={52} aria-label="阅读模式">
        <Icon w={14} h={14}>
          <path d="M4.5 3.5 V.5 H9.5 V3.5 M4.5 10.5 V13.5 H9.5 V10.5 M3.5 4.5 H.5 V9.5 H3.5 M10.5 4.5 H13.5 V9.5 H10.5 M4.5 4.5 H9.5 V9.5 H4.5 Z" />
        </Icon>
        <Caret />
      </StatusButton>
      <Rule $height={14} />
      <ViewModes>
        <StatusButton $on aria-label="普通视图">
          <Icon w={14} h={12}>
            <path d="M.5 .5 H13.5 V11.5 H.5 Z M.5 4.5 H13.5 M4.5 .5 V11.5" />
          </Icon>
        </StatusButton>
        <StatusButton aria-label="分页预览">
          <Icon w={14} h={12}>
            <path d="M.5 .5 H13.5 V11.5 H.5 Z M6.5 .5 V11.5" />
          </Icon>
        </StatusButton>
        <StatusButton aria-label="页面布局">
          <Icon w={14} h={12}>
            <path d="M.5 .5 H10.5 V7.5 H.5 Z M.5 9 V11.5 H13.5 V.5 H12" />
          </Icon>
        </StatusButton>
      </ViewModes>
      <Rule $height={14} />
      <ZoomLevel>
        190%
        <Caret />
      </ZoomLevel>
      <StatusButton $width={12} aria-label="缩小">
        <Icon w={12} h={4} sw={2}>
          <path d="M0 2 H12" />
        </Icon>
      </StatusButton>
      <ZoomSlider type="range" aria-label="缩放比例" min={0} max={100} defaultValue={50} />
      <StatusButton $width={12} aria-label="放大">
        <Icon w={12} h={12} sw={2}>
          <path d="M6 0 V12 M0 6 H12" />
        </Icon>
      </StatusButton>
    </StatusBar>
  </>
);

const Overlays = () => (
  <>
    <ImeBox>
      <span>CH</span>
      <Icon w={12} h={14} sw={1.2}>
        <path d="M4 2 Q11 4 10 10 Q6 14 2 10 Q7 9 4 2 Z" />
      </Icon>
      <span>简</span>
    </ImeBox>
    <Watermark>
      <svg width="44" height="42" viewBox="0 0 44 42" aria-hidden="true">
        <defs>
          <linearGradient id="swirlTop" x1="0" y1="1" x2="1" y2="0">
            <stop offset="0" stopColor="#3a66b8" />
            <stop offset="1" stopColor="#62c8ea" />
          </linearGradient>
          <linearGradient id="swirlBottom" x1="0" y1="1" x2="1" y2="0">
            <stop offset="0" stopColor="#d8dc4c" />
            <stop offset="1" stopColor="#3cb878" />
          </linearGradient>
        </defs>
        <path d="M43 1 Q27 3 16 9 Q4 17 5 24 Q6 29 12 30 Q3 31 1 25 Q0 13 14 6 Q27 -1 43 1 Z" fill="url(#swirlTop)" />
        <path d="M32 14 Q42 14 41 23 Q38 38 6 38 Q28 34 31 23 Q33 18 28 15 Z" fill="url(#swirlBottom)" />
        <path d="M36 4 Q10 10 9 22 Q9 29 16 28 Q24 26 24 20 Q23 17 19 18 Q15 20 15 24" fill="none" stroke="#4a8ccc" strokeWidth="2.5" />
      </svg>
      <WatermarkText>
        <WatermarkName>极光下载站</WatermarkName>
        <WatermarkUrl>www.xz7.com</WatermarkUrl>
      </WatermarkText>
    </Watermark>
  </>
);

export default function App() {
  return (
    <>
      <GlobalStyle />
      <Shell>
        <Title />
        <Menu />
        <Tools />
        <Formula />
        <Sheet />
        <Bottom />
        <Overlays />
      </Shell>
    </>
  );
}
